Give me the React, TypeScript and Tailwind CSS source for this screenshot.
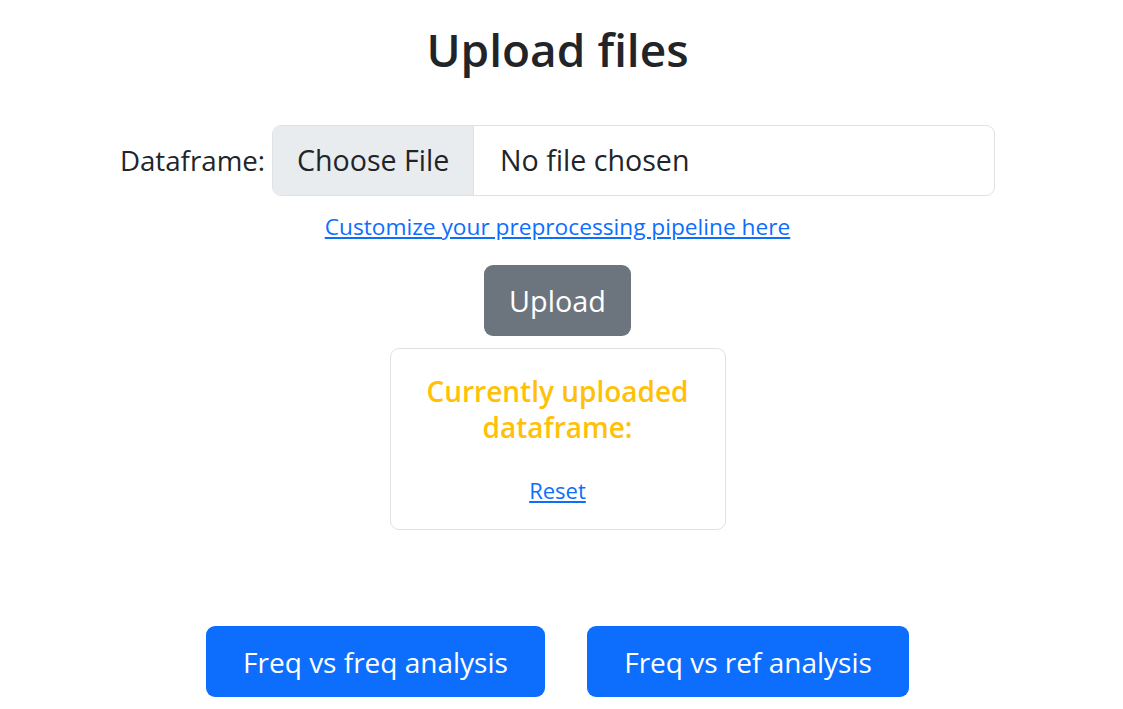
import React from "react";

export default function App() {
  return (
    <div
      className="w-[1115px] min-h-[709px] bg-white flex flex-col items-center text-[#212529]"
      style={{ fontFamily: '"Open Sans", "Noto Sans", sans-serif' }}
    >
      <h1 className="mt-[21px] h-[57px] text-[46px] font-semibold leading-[57px]">Upload files</h1>

      <div className="mt-[47px] flex items-center gap-[7px]">
        <label className="text-[27.7px] leading-[1.5]">Dataframe:</label>
        <div className="w-[723px] h-[71px] border border-[#dee2e6] rounded-[9px] flex overflow-hidden text-[28.6px]">
          <div className="w-[201px] bg-[#e9ecef] border-r border-[#dee2e6] flex items-center justify-center">
            Choose File
          </div>
          <div className="pl-[26px] flex items-center">No file chosen</div>
        </div>
      </div>

      <a href="#" className="mt-[13px] h-[36px] text-[22.7px] leading-[36px] text-[#0d6efd] underline">
        Customize your preprocessing pipeline here
      </a>

      <button className="mt-[20px] w-[147px] h-[71px] rounded-[9px] bg-[#6c757d] text-white text-[28.8px] leading-[1.5]">
        Upload
      </button>

      <div className="mt-[12px] w-[336px] h-[182px] border border-[#dee2e6] rounded-[9px] px-[24px] pt-[24px] flex flex-col items-center">
        <h5 className="text-[28px] leading-[36px] font-semibold text-[#ffc107] text-center">
          Currently uploaded dataframe:
        </h5>
        <a href="#" className="mt-[27px] h-[36px] text-[22px] leading-[36px] text-[#0d6efd] underline">
          Reset
        </a>
      </div>

      <div className="mt-[96px] flex gap-[42px]">
        <button className="w-[339px] h-[71px] rounded-[9px] bg-[#0d6efd] text-white text-[28px] leading-[1.5]">
          Freq vs freq analysis
        </button>
        <button className="w-[322px] h-[71px] rounded-[9px] bg-[#0d6efd] text-white text-[28px] leading-[1.5]">
          Freq vs ref analysis
        </button>
      </div>
    </div>
  );
}
